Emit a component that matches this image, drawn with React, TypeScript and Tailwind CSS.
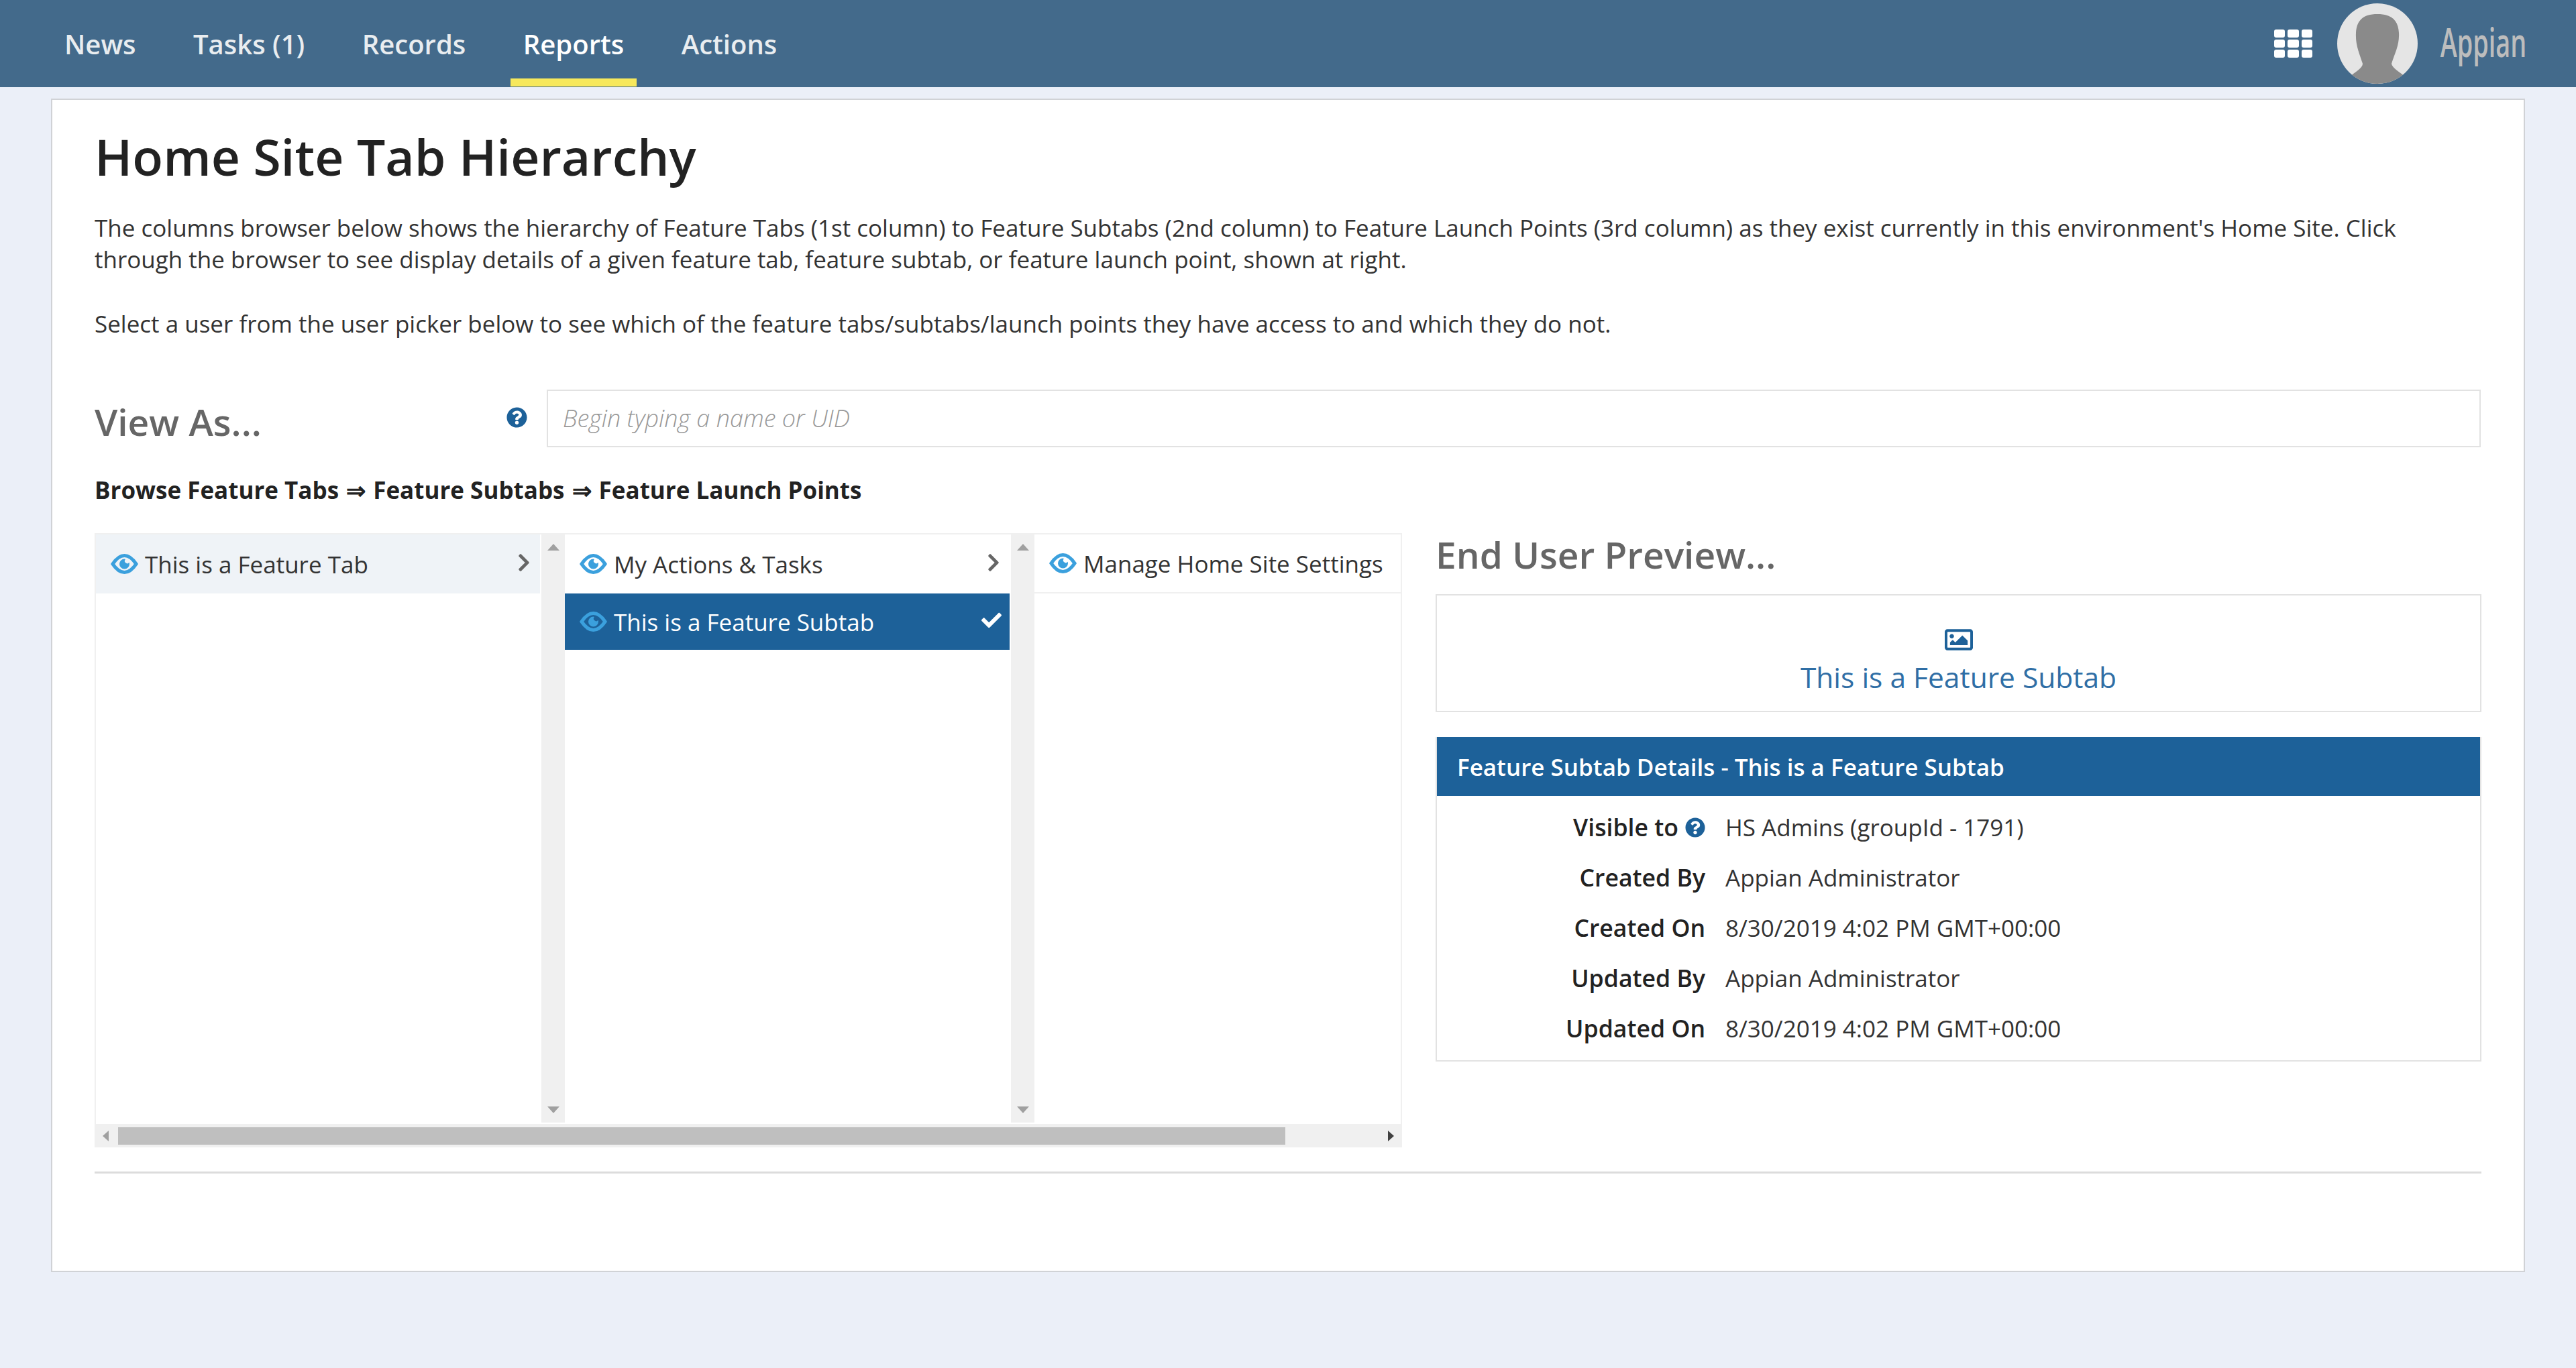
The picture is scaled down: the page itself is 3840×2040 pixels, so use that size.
import React from "react";
import { FaChevronRight, FaCheck, FaQuestionCircle, FaRegImage } from "react-icons/fa";

const font = { fontFamily: '"Open Sans", sans-serif' };

function Eye() {
  return (
    <svg viewBox="0 0 41 32" className="mr-[10px] h-[32px] w-[41px] shrink-0">
      <path
        d="M3 16C9 7 14 3.5 20.5 3.5C27 3.5 32 7 38 16C32 25 27 28.5 20.5 28.5C14 28.5 9 25 3 16Z"
        fill="none"
        stroke="#3ba0dd"
        strokeWidth="5"
      />
      <path
        d="M20.5 8.5A7.5 7.5 0 1 0 28 16C28 15 27.8 14.4 27.5 13.8A3.4 3.4 0 0 1 21.8 9.2C21.4 8.8 21 8.5 20.5 8.5Z"
        fill="#3ba0dd"
      />
    </svg>
  );
}

function Row({ label, help, value }: { label: string; help?: boolean; value: string }) {
  return (
    <div className="flex h-[75px] items-center">
      <div className="flex w-[400px] items-center justify-end gap-[10px] text-right text-[35.6px] font-semibold text-[#222]">
        <span>{label}</span>
        {help && <FaQuestionCircle className="text-[#1d6199] text-[30px]" />}
      </div>
      <div className="ml-[30px] text-[#333]">{value}</div>
    </div>
  );
}

function Item({ label, sel, hl, arrow, check, h }: { label: string; sel?: boolean; hl?: boolean; arrow?: boolean; check?: boolean; h: string }) {
  return (
    <div className={`flex ${h} items-center pl-[22px] pr-[9px] ${sel ? "bg-[#1d6199] text-white" : hl ? "bg-[#eff3f7] text-[#333]" : "text-[#333]"}`}>
      <Eye />
      <span className="whitespace-nowrap">{label}</span>
      {arrow && <FaChevronRight className="mb-[4px] ml-auto text-[30px] text-[#666]" />}
      {check && <FaCheck className="mb-[4px] ml-auto mr-[3px] text-[30px] text-white" />}
    </div>
  );
}

function VBar() {
  return (
    <div className="mb-[2px] flex w-[35px] shrink-0 flex-col items-center justify-between bg-[#f0f0f0] py-[14px]">
      <div className="h-0 w-0 border-x-[9px] border-b-[10px] border-x-transparent border-b-[#a0a0a0]" />
      <div className="h-0 w-0 border-x-[9px] border-t-[10px] border-x-transparent border-t-[#a0a0a0]" />
    </div>
  );
}

export default function App() {
  return (
    <div style={font} className="flex min-h-[2040px] flex-col bg-[#ebeff8] text-[35px] leading-[47px] text-[#333]">
      <header className="flex h-[130px] items-center bg-[#436a8b] pl-[77px] pr-[75px]">
        <nav className="flex h-full items-center gap-[47.5px] text-[40px] font-semibold text-[#e9edf0]">
          {["News", "Tasks (1)", "Records", "Reports", "Actions"].map((t) => (
            <div
              key={t}
              className={`flex h-[128px] items-center px-[19px] pt-[12px] ${t === "Reports" ? "border-b-[12px] border-[#f7e85c] text-white" : "border-b-[12px] border-transparent"}`}
            >
              {t}
            </div>
          ))}
        </nav>
        <div className="ml-auto flex items-center">
          <div className="grid h-[43px] w-[57px] grid-cols-3 grid-rows-3 gap-x-[4px] gap-y-[3px]">
            {Array.from({ length: 9 }).map((_, i) => (
              <div key={i} className="rounded-[3px] bg-white" />
            ))}
          </div>
          <div className="ml-[37px] h-[120px] w-[120px] overflow-hidden rounded-full bg-[#e5e5e5]">
            <svg viewBox="0 0 120 120" className="h-full w-full">
              <path
                d="M60 16C38 16 29 26 28 44C27 62 33 74 38 90C38 96 28 102 20 108C32 118 46 120 60 120C74 120 88 118 100 108C92 102 82 96 81 90C86 74 93 62 92 44C91 26 82 16 60 16Z"
                fill="#8a8a8a"
              />
            </svg>
          </div>
          <div className="ml-[35px] flex w-[126px] justify-center">
            <span className="-mt-[6px] origin-center scale-x-[0.63] whitespace-nowrap text-[60px] font-semibold leading-[60px] text-[#bdbdbd]">Appian</span>
          </div>
        </div>
      </header>

      <main className="mx-[76px] mt-[17px] h-[1750px] border-2 border-[#d0d2d6] bg-white pl-[63px] pr-[63px]">
        <h1 className="mt-[34px] text-[75px] font-semibold leading-[100px] text-[#222]">Home Site Tab Hierarchy</h1>
        <p className="mt-[33px]">
          The columns browser below shows the hierarchy of Feature Tabs (1st column) to Feature Subtabs (2nd column) to Feature Launch Points (3rd column) as they exist currently in this environment's Home Site. Click through the browser to see display details of a given feature tab, feature subtab, or feature launch point, shown at right.
        </p>
        <p className="mt-[49px]">
          Select a user from the user picker below to see which of the feature tabs/subtabs/launch points they have access to and which they do not.
        </p>

        <div className="mt-[75px] flex h-[86px] items-center">
          <div className="w-[614px] pt-[8px] text-[55px] font-semibold text-[#666]">View As...</div>
          <FaQuestionCircle className="mb-[4px] text-[31px] text-[#1d6199]" />
          <div className="ml-[29px] flex h-[86px] w-[2883px] items-center border-2 border-[#e2e2e2] pb-[2px] pl-[22px] text-[36px] font-light italic text-[#999]">
            Begin typing a name or UID
          </div>
        </div>

        <div className="mt-[40px] font-bold text-[#222]">
          Browse Feature Tabs <span className="mx-[2px]">⇒</span> Feature Subtabs <span className="mx-[2px]">⇒</span> Feature Launch Points
        </div>

        <div className="mt-[41px] flex gap-[50px]">
          <div className="w-[1949px] shrink-0">
            <div className="flex h-[881px] border-x-2 border-t-2 border-[#f0f0f0]">
              <div className="w-[664px] shrink-0 pr-[2px]">
                <Item h="h-[88px]" label="This is a Feature Tab" hl arrow />
              </div>
              <VBar />
              <div className="w-[665px] shrink-0 pr-[2px]">
                <Item h="h-[88px]" label="My Actions & Tasks" arrow />
                <Item h="h-[84px]" label="This is a Feature Subtab" sel check />
              </div>
              <VBar />
              <div className="flex-1">
                <div className="border-b-2 border-[#f0f0f0]">
                  <Item h="h-[86px]" label="Manage Home Site Settings" />
                </div>
              </div>
            </div>
            <div className="flex h-[35px] items-center bg-[#f0f0f0]">
              <div className="ml-[12px] h-0 w-0 border-y-[8px] border-r-[9px] border-y-transparent border-r-[#a0a0a0]" />
              <div className="ml-[14px] h-[26px] w-[1740px] bg-[#bfbfbf]" />
              <div className="ml-auto mr-[12px] h-0 w-0 border-y-[8px] border-l-[9px] border-y-transparent border-l-[#404040]" />
            </div>
          </div>

          <div className="flex-1">
            <div className="-mt-[8px] h-[99px] text-[55px] font-semibold leading-[80px] text-[#666]">End User Preview...</div>
            <div className="flex h-[176px] flex-col items-center border-2 border-[#e2e2e2] pt-[45px]">
              <FaRegImage className="text-[42px] text-[#1d6199]" />
              <div className="mt-[11px] text-[42.5px] text-[#2f6ea5]">This is a Feature Subtab</div>
            </div>
            <div className="mt-[37px] border-x-2 border-b-2 border-[#e2e2e2]">
              <div className="flex h-[88px] items-center bg-[#1d6199] pl-[30px] font-semibold text-white">
                Feature Subtab Details - This is a Feature Subtab
              </div>
              <div className="pb-[10px] pt-[9px]">
                <Row label="Visible to" help value="HS Admins (groupId - 1791)" />
                <Row label="Created By" value="Appian Administrator" />
                <Row label="Created On" value="8/30/2019 4:02 PM GMT+00:00" />
                <Row label="Updated By" value="Appian Administrator" />
                <Row label="Updated On" value="8/30/2019 4:02 PM GMT+00:00" />
              </div>
            </div>
          </div>
        </div>

        <div className="mt-[36px] h-[3px] bg-[#dcdcdc]" />
      </main>
    </div>
  );
}
